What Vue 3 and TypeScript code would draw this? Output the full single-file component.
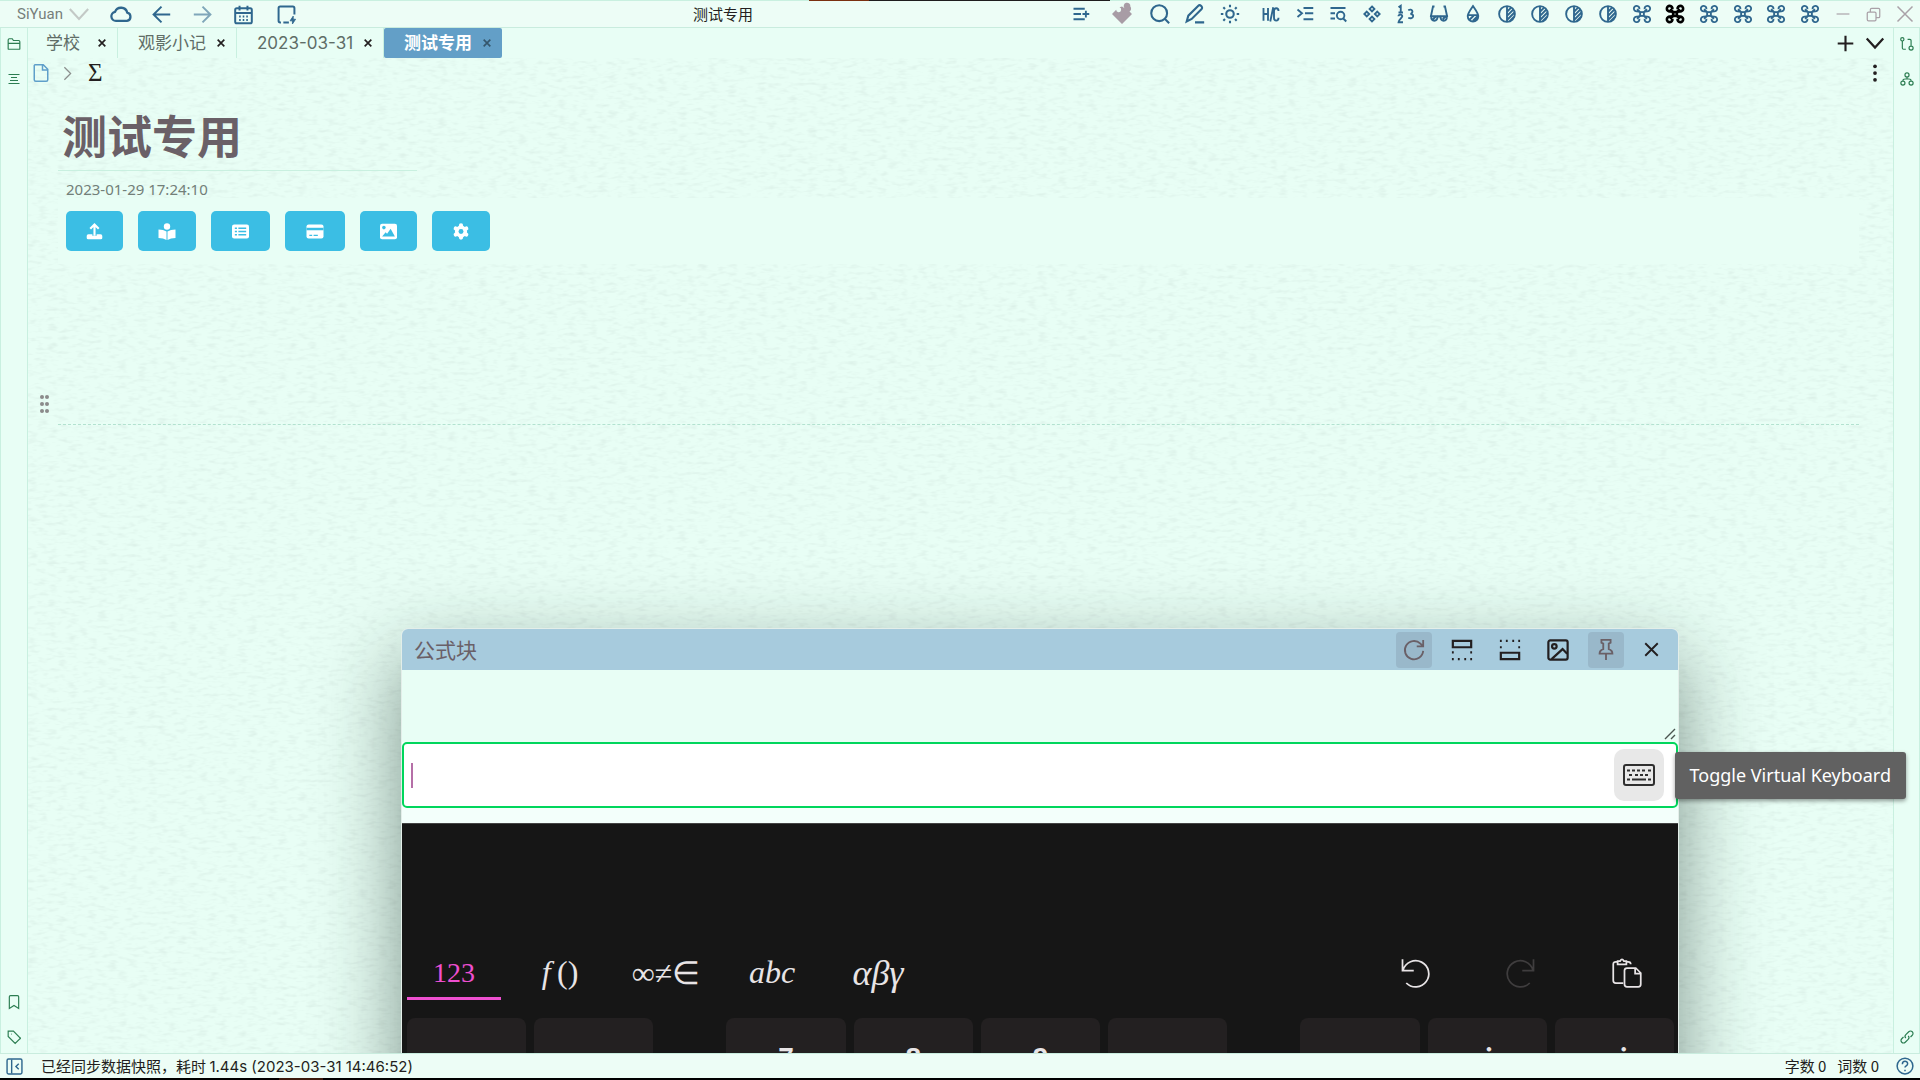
<script setup lang="ts">
import { ref } from 'vue'

interface Action {
  icon: string
  label: string
  dark?: boolean
}

const drone =
  '<path d="M8.500 5.500A3.700 3.700 0 1 0 5.500 8.500L9 9M15.500 5.500A3.700 3.700 0 1 1 18.500 8.500L15 9M8.500 18.500A3.700 3.700 0 1 1 5.500 15.500L9 15M15.500 18.500A3.700 3.700 0 1 0 18.500 15.500L15 15M5.500 5.500l4 4M18.500 5.500l-4 4M5.500 18.500l4-4M18.500 18.500l-4-4"/><rect x="9.500" y="9.500" width="5" height="5"/>'
const half =
  '<circle cx="12" cy="12" r="10.500"/><path d="M12 1.500v21M12 9l5.500-5.500M12 14.500l8.500-8.500M12 20L22 10M15.500 21.500l6-6"/>'

const icons: Record<string, string> = {
  chevron: '<path d="M1 6l11 12L23 6"/>',
  cloud: '<path d="M6.500 19.500a5 5 0 0 1-1-9.900A7 7 0 0 1 18.800 10.500a4.600 4.600 0 0 1-.3 9z"/>',
  back: '<path d="M23 12H2M12 2L2 12l10 10"/>',
  forward: '<path d="M1 12h21M12 2l10 10-10 10"/>',
  calendar:
    '<rect x="1.500" y="4" width="21" height="19" rx="2"/><path d="M1.500 10h21M7 1v6M17 1v6"/><path d="M6.500 14.500h2M11 14.500h2M15.500 14.500h2M6.500 19h2M11 19h2M15.500 19h2"/>',
  device:
    '<path d="M22 12V4a2 2 0 0 0-2-2H4a2 2 0 0 0-2 2v16a2 2 0 0 0 2 2h1M8 22h7"/><path d="M20.500 14v4h3l-4 6v-4h-3z" fill="currentColor" stroke-width="1"/>',
  addlist: '<path d="M2 5h15M2 12h10M2 19h15M14 12h9M18.500 7.500v9"/>',
  puzzle:
    '<path fill="currentColor" stroke="none" d="M0 12l5-5a3 3 0 1 0 4-3l3-1 3 2a4 4 0 1 1 7-2 4 4 0 0 1-1 6l3 3-12 12z"/>',
  search: '<circle cx="11" cy="11" r="9.500"/><path d="M18 18l5 5"/>',
  pen: '<path d="M2 21l2-7L16 2c2-2 6 2 4 4L8 18zM12 22h11"/>',
  sun: '<circle cx="12" cy="12" r="4.500"/><path d="M12 1v3M12 20v3M1 12h3M20 12h3M4 4l2 2M18 18l2 2M20 4l-2 2M4 20l2-2"/>',
  hc: '<path d="M2 4v17M8 4v17M2 12h6M15 3l-4 19M22 8c0-5-6-5-6 0v9c0 5 6 5 6 0"/>',
  indent: '<path d="M2 6l6 5-6 5M10 4h13M12 11h11M10 19h13"/>',
  find: '<path d="M2 4h20M2 11h6M2 18h6"/><circle cx="15.500" cy="14" r="5"/><path d="M19 18l4 4"/>',
  diamonds:
    '<path d="M12 2l3.200 3.200-3.200 3.200-3.200-3.200zM12 15.600l3.200 3.200-3.200 3.200-3.200-3.200zM5 8.800l3.200 3.200L5 15.200 1.800 12zM19 8.800l3.200 3.200-3.200 3.200-3.200-3.200z"/>',
  ranks:
    '<path d="M2 3l3-2v9M2 10h6M2 15c0-3 5-3 5 0 0 2-5 5-5 8h6M15 7c5-3 8 3 3 5 6 0 4 8-3 5"/>',
  glasses:
    '<path d="M6 2H4L1 16M18 2h2l3 14M10 16q2-2 4 0"/><path d="M1.500 15H10c0 8-8.500 8-8.500 0zM14 15h8.500c0 8-8.500 8-8.500 0zM4 19l4-4M17 19l4-4"/>',
  drop: '<path d="M12 1.500C9 6 5 11 5 15a7 7 0 0 0 14 0c0-4-4-9-7-13.500zM5 13.500h14M8 19l5-5M12 21l6-6"/>',
  half,
  drone,
  minimize: '<path d="M1 12h22"/>',
  restore:
    '<rect x="2" y="8" width="14" height="14" rx="2"/><path d="M7 8V4a2 2 0 0 1 2-2h11a2 2 0 0 1 2 2v11a2 2 0 0 1-2 2h-4"/>',
  close: '<path d="M2 2l20 20M22 2L2 22"/>',
  plus: '<path d="M12 1v22M1 12h22"/>',
  more: '<g fill="currentColor" stroke="none"><circle cx="12" cy="3" r="2.500"/><circle cx="12" cy="12" r="2.500"/><circle cx="12" cy="21" r="2.500"/></g>',
  folder: '<path d="M2 20V5a2 2 0 0 1 2-2h5l2 3h9a2 2 0 0 1 2 2v12a1 1 0 0 1-1 1H3a1 1 0 0 1-1-1zM2 11h20"/>',
  outline: '<path d="M1 3h22M6 9h12M4 15h16M1 21h22"/>',
  bookmark: '<path d="M4 23V3a2 2 0 0 1 2-2h12a2 2 0 0 1 2 2v20l-8-5z"/>',
  tag: '<path d="M2 2h9l11 11a1 1 0 0 1 0 2l-8 8L2 11zM7 7h1"/>',
  graph:
    '<circle cx="4" cy="4" r="2.800"/><circle cx="19" cy="19" r="3.500"/><path d="M4 7v12a2 2 0 0 0 2 2h4M19 15V6a2 2 0 0 0-2-2h-4"/>',
  tree: '<circle cx="12" cy="5" r="3.500"/><circle cx="5" cy="19" r="3.500"/><circle cx="19" cy="19" r="3.500"/><path d="M12 8v5M5 15q0-3 4-3h6q4 0 4 3"/>',
  link: '<path d="M10 14c-2-2-2-4 0-6l5-5c4-4 10 2 6 6l-3 3M14 10c2 2 2 4 0 6l-5 5c-4 4-10-2-6-6l3-3"/>',
  dockhide: '<rect x="1.500" y="1.500" width="21" height="21" rx="2"/><path d="M8 2v20M18 8l-4 4 4 4"/>',
  help: '<circle cx="12" cy="12" r="10.500"/><path d="M8.500 9.500c0-5 7-5 7-.5 0 3-3.500 2.500-3.500 5M12 17v2"/>',
  file: '<path d="M4 1h11l6 6v14a2 2 0 0 1-2 2H5a2 2 0 0 1-2-2V2zM14 1v7h7"/>',
  right: '<path d="M7 2l10 10L7 22"/>',
  refresh: '<path d="M22 13a10 10 0 1 1-3-8l3 3M22 1v7h-7"/>',
  layoutTop:
    '<path d="M2 2h20v7H2z"/><path d="M1 14.500h2M21 14.500h2M1 22h2M7.500 22h2M14.500 22h2M21 22h2"/>',
  layoutBottom:
    '<path d="M2 15h20v7H2z"/><path d="M1 2h2M7.500 2h2M14.500 2h2M21 2h2M1 9h2M21 9h2"/>',
  image:
    '<rect x="1.500" y="1.500" width="21" height="21" rx="2"/><circle cx="8" cy="8" r="2.500"/><path d="M5 22L17 11l5 5"/>',
  pin: '<path d="M7 1h10v3l-2 1v6c3 1 4 3 4 5H5c0-2 1-4 4-5V5L7 4zM12 16v7"/>',
  undo: '<path d="M2 1v9h9M2.500 9.500A10.500 10.500 0 1 1 5 20"/>',
  redo: '<path d="M22 1v9h-9M21.500 9.500A10.500 10.500 0 1 0 19 20"/>',
  paste:
    '<path d="M4 3H3a2 2 0 0 0-2 2v13a2 2 0 0 0 2 2h6M12 3h1q2 0 2 2M4.500 2.500h2q1.500-3 3 0h2V5h-7z"/><path d="M12 8h7l4 4v9a2 2 0 0 1-2 2h-9a2 2 0 0 1-2-2V10a2 2 0 0 1 2-2zM18.500 8v4.500H23"/>',
}

const navActions: Action[] = [
  { icon: 'cloud', label: '同步' },
  { icon: 'back', label: '后退' },
  { icon: 'forward', label: '前进' },
  { icon: 'calendar', label: '日记' },
  { icon: 'device', label: '闪卡' },
]
const pluginActions: Action[] = [
  { icon: 'hc', label: '标题' },
  { icon: 'indent', label: '缩进' },
  { icon: 'find', label: '查找' },
  { icon: 'diamonds', label: '组件' },
  { icon: 'ranks', label: '编号' },
  { icon: 'glasses', label: '阅读' },
  { icon: 'drop', label: '主题色' },
  ...[1, 2, 3, 4].map((n) => ({ icon: 'half', label: `配色 ${n}` })),
  ...[1, 2, 3, 4, 5, 6].map((n) => ({ icon: 'drone', label: `片段 ${n}`, dark: n === 2 })),
]
const tabs = [
  { title: '学校' },
  { title: '观影小记' },
  { title: '2023-03-31', latin: true },
  { title: '测试专用', active: true },
]
const blockButtons = [
  {
    label: '上传',
    width: 17,
    svg: '<path d="M1 18a3 3 0 0 1 3-2h5v2h6v-2h5a3 3 0 0 1 3 2v3a2 2 0 0 1-2 2H3a2 2 0 0 1-2-2z" fill="currentColor"/><path d="M12 18V3M6 8l6-6 6 6" fill="none" stroke="currentColor" stroke-width="3"/>',
  },
  {
    label: '阅读',
    width: 18,
    svg: '<circle cx="12" cy="5" r="4.500" fill="currentColor"/><path d="M0 9q7 0 11.300 3v12Q7 21 0 21zM24 9q-7 0-11.300 3v12Q17 21 24 21z" fill="currentColor"/>',
  },
  {
    label: '列表',
    width: 19,
    svg: '<rect x="0" y="2" width="24" height="20" rx="3" fill="currentColor"/><path d="M4 7.500h3M9 7.500h11M4 12h3M9 12h11M4 16.500h3M9 16.500h11" stroke="#3bbee4" stroke-width="2"/>',
  },
  {
    label: '卡片',
    width: 20,
    svg: '<rect x="0" y="2" width="24" height="20" rx="3" fill="currentColor"/><path d="M0 8.500h24" stroke="#3bbee4" stroke-width="3.500"/><path d="M4 17.500h4M10 17.500h6" stroke="#3bbee4" stroke-width="2"/>',
  },
  {
    label: '图片',
    width: 17,
    svg: '<rect x="0" y="1" width="24" height="22" rx="3" fill="currentColor"/><circle cx="5.500" cy="6.500" r="2.500" fill="#3bbee4"/><path d="M3 19l5-6 2 2 5-7 6 11z" fill="#3bbee4"/>',
  },
  {
    label: '设置',
    width: 18,
    svg: '<path d="M12 3.500v17M4.600 7.800l14.800 8.400M19.400 7.800L4.600 16.200" stroke="currentColor" stroke-width="6" stroke-linecap="round"/><circle cx="12" cy="12" r="8.500" fill="currentColor"/><circle cx="12" cy="12" r="3.500" fill="#3bbee4"/>',
  },
]
const dialogActions = [
  { icon: 'refresh', label: '刷新', pressed: true },
  { icon: 'layoutTop', label: '上方', pressed: false },
  { icon: 'layoutBottom', label: '下方', pressed: false },
  { icon: 'image', label: '导出图片', pressed: false },
  { icon: 'pin', label: '钉住', pressed: true },
]
const layers = [
  { id: 'numeric', label: '123' },
  { id: 'functions', label: 'f' },
  { id: 'symbols', label: '∞≠∈' },
  { id: 'letters', label: 'abc' },
  { id: 'greek', label: 'αβγ' },
]
const activeLayer = ref('numeric')
const keys = ['', '', null, '7', '8', '9', '', null, '', 'i', 'xi']
const source = ref('')
const formula = ref('')
</script>

<template>
  <div class="app">
    <header class="toolbar">
      <div class="edge"></div>
      <button class="brand">
        SiYuan
        <svg viewBox="0 0 24 24" class="i20 fade" v-html="icons.chevron"></svg>
      </button>
      <nav class="nav">
        <button v-for="a in navActions" :key="a.icon" :aria-label="a.label" :class="{ faded: a.icon === 'forward' }">
          <svg viewBox="0 0 24 24" :class="a.icon === 'cloud' ? 'i22' : 'i19'" v-html="icons[a.icon]"></svg>
        </button>
      </nav>
      <h2 class="window-title">测试专用</h2>
      <div class="wide">
        <button aria-label="添加"><svg viewBox="0 0 24 24" class="i18" v-html="icons.addlist"></svg></button>
        <button aria-label="集市" class="mauve"><svg viewBox="0 0 24 24" class="i20" v-html="icons.puzzle"></svg></button>
      </div>
      <div class="medium">
        <button aria-label="搜索"><svg viewBox="0 0 24 24" class="i20" v-html="icons.search"></svg></button>
        <button aria-label="编辑"><svg viewBox="0 0 24 24" class="i20" v-html="icons.pen"></svg></button>
        <button aria-label="外观"><svg viewBox="0 0 24 24" class="i20" v-html="icons.sun"></svg></button>
      </div>
      <div class="plugins">
        <button v-for="a in pluginActions" :key="a.label" :aria-label="a.label" :class="{ dark: a.dark }">
          <svg viewBox="0 0 24 24" class="i18" v-html="icons[a.icon]"></svg>
        </button>
      </div>
      <div class="window-buttons">
        <button aria-label="最小化"><svg viewBox="0 0 24 24" class="i14" v-html="icons.minimize"></svg></button>
        <button aria-label="还原"><svg viewBox="0 0 24 24" class="i15" v-html="icons.restore"></svg></button>
        <button aria-label="关闭窗口"><svg viewBox="0 0 24 24" class="i18" v-html="icons.close"></svg></button>
      </div>
    </header>

    <div class="body">
      <aside class="dock">
        <button aria-label="文档树"><svg viewBox="0 0 24 24" class="i14" v-html="icons.folder"></svg></button>
        <button aria-label="大纲"><svg viewBox="0 0 24 24" class="i12" v-html="icons.outline"></svg></button>
        <span class="grow"></span>
        <button aria-label="书签"><svg viewBox="0 0 24 24" class="i14" v-html="icons.bookmark"></svg></button>
        <button aria-label="标签"><svg viewBox="0 0 24 24" class="i14" v-html="icons.tag"></svg></button>
      </aside>

      <main class="workspace">
        <div class="tabbar">
          <div v-for="t in tabs" :key="t.title" class="tab" :class="{ active: t.active, latin: t.latin }">
            <span>{{ t.title }}</span>
            <button :aria-label="`关闭 ${t.title}`"><svg viewBox="0 0 24 24" class="i8" v-html="icons.close"></svg></button>
          </div>
          <span class="grow"></span>
          <button class="tab-tool" aria-label="新建"><svg viewBox="0 0 24 24" class="i17" v-html="icons.plus"></svg></button>
          <button class="tab-tool" aria-label="切换"><svg viewBox="0 0 24 24" class="i18" v-html="icons.chevron"></svg></button>
        </div>

        <section class="editor">
          <svg class="paper" aria-hidden="true">
            <filter id="grain" x="0" y="0" width="100%" height="100%">
              <feTurbulence type="fractalNoise" baseFrequency="0.1 0.28" numOctaves="2" seed="4" />
              <feColorMatrix values="0 0 0 0 0.650 0 0 0 0 0.800 0 0 0 0 0.740 1.300 0 0 0 -0.620" />
            </filter>
            <rect width="100%" height="100%" filter="url(#grain)" />
          </svg>
          <div class="breadcrumb">
            <svg viewBox="0 0 24 24" class="i18 blue" v-html="icons.file"></svg>
            <svg viewBox="0 0 24 24" class="i15 gray" v-html="icons.right"></svg>
            <span class="sigma">Σ</span>
            <span class="grow"></span>
            <button aria-label="更多"><svg viewBox="0 0 24 24" class="i18" v-html="icons.more"></svg></button>
          </div>
          <article class="doc">
            <h1>测试专用</h1>
            <time>2023-01-29 17:24:10</time>
            <div class="buttons">
              <button v-for="b in blockButtons" :key="b.label" :aria-label="b.label">
                <svg viewBox="0 0 24 24" :style="{ width: b.width + 'px' }" v-html="b.svg"></svg>
              </button>
            </div>
            <div class="block">
              <button class="handle" aria-label="拖动块"><i v-for="n in 6" :key="n"></i></button>
            </div>
          </article>
        </section>

        <section class="dialog" role="dialog" aria-labelledby="dialog-title">
          <header>
            <h3 id="dialog-title">公式块</h3>
            <button v-for="a in dialogActions" :key="a.icon" :aria-label="a.label" :class="{ pressed: a.pressed }">
              <svg viewBox="0 0 24 24" class="i22" v-html="icons[a.icon]"></svg>
            </button>
            <button aria-label="关闭" class="shut"><svg viewBox="0 0 24 24" class="i15" v-html="icons.close"></svg></button>
          </header>
          <div class="source">
            <textarea v-model="source" aria-label="公式源码"></textarea>
            <svg viewBox="0 0 12 12" class="i12 grip"><path d="M1 11L11 1M7 11l4-4" /></svg>
          </div>
          <div class="mathfield">
            <span class="caret"></span>
            <input v-model="formula" aria-label="公式" />
            <button class="toggle" aria-label="Toggle Virtual Keyboard">
              <svg viewBox="0 0 32 22" class="keyboard-icon">
                <rect x="1" y="1" width="30" height="20" rx="2" />
                <path d="M4 6.500h3M9 6.500h3M14 6.500h3M19 6.500h3M25 6.500h3M6 11h3M12 11h3M17 11h3M22 11h3M4 15.500h3M9 15.500h14M25 15.500h3" />
              </svg>
            </button>
          </div>
          <div class="keyboard">
            <div class="layers">
              <button v-for="l in layers" :key="l.id" :class="[l.id, { current: activeLayer === l.id }]" @click="activeLayer = l.id">
                {{ l.label }}<span v-if="l.id === 'functions'" class="upright">&thinsp;()</span>
              </button>
              <span class="grow"></span>
              <button aria-label="撤销"><svg viewBox="0 0 24 24" class="i30" v-html="icons.undo"></svg></button>
              <button aria-label="重做" class="off"><svg viewBox="0 0 24 24" class="i30" v-html="icons.redo"></svg></button>
              <button aria-label="粘贴"><svg viewBox="0 0 24 24" class="i30" v-html="icons.paste"></svg></button>
            </div>
            <div class="keys">
              <template v-for="(k, n) in keys" :key="n">
                <span v-if="k === null" class="space"></span>
                <button v-else :aria-label="k || '键'" :class="{ math: k.includes('i') }">{{ k }}</button>
              </template>
            </div>
          </div>
        </section>
      </main>

      <aside class="dock right">
        <button aria-label="关系图"><svg viewBox="0 0 24 24" class="i14" v-html="icons.graph"></svg></button>
        <button aria-label="全局关系图"><svg viewBox="0 0 24 24" class="i14" v-html="icons.tree"></svg></button>
        <span class="grow"></span>
        <button aria-label="反向链接"><svg viewBox="0 0 24 24" class="i14" v-html="icons.link"></svg></button>
      </aside>
      <div class="tooltip" role="tooltip">Toggle Virtual Keyboard</div>
    </div>

    <footer class="status">
      <button aria-label="隐藏停靠栏"><svg viewBox="0 0 24 24" class="i17" v-html="icons.dockhide"></svg></button>
      <span class="message">已经同步数据快照，耗时 <span class="figures">1.44s (2023-03-31 14:46:52)</span></span>
      <span class="grow"></span>
      <span>字数 0</span>
      <span>词数 0</span>
      <button aria-label="帮助"><svg viewBox="0 0 24 24" class="i18" v-html="icons.help"></svg></button>
    </footer>
    <div class="base"></div>
  </div>
</template>

<style>
body {
  margin: 0;
  background: #e8fef5;
}
</style>

<style scoped>
* {
  box-sizing: border-box;
}
.app {
  height: 100vh;
  display: flex;
  flex-direction: column;
  overflow: hidden;
  color: #231f20;
  background: #e8fef5;
  font-family: 'Noto Sans', 'Noto Sans CJK SC', sans-serif;
}
button {
  display: flex;
  align-items: center;
  justify-content: center;
  padding: 0;
  border: 0;
  background: none;
  color: inherit;
  font: inherit;
}
svg {
  display: block;
  flex: none;
  overflow: visible;
  fill: none;
  stroke: currentColor;
  stroke-width: 2;
}
.i8 { width: 8px; height: 8px; stroke-width: 5; }
.i12 { width: 12px; height: 12px; }
.i14 { width: 14px; height: 14px; }
.i15 { width: 15px; height: 15px; }
.i17 { width: 17px; height: 17px; }
.i18 { width: 18px; height: 18px; }
.i19 { width: 19px; height: 19px; }
.i20 { width: 20px; height: 20px; }
.i22 { width: 22px; height: 22px; }
.i30 { width: 30px; height: 30px; stroke-width: 1.4; }
.grow { flex: 1; }

.toolbar {
  position: relative;
  flex: none;
  display: flex;
  height: 28px;
  border-top: 1px solid #c9f0e0;
  border-bottom: 1px solid #c9ecde;
  background: #edfdf6;
  color: #2f678e;
}
.toolbar svg {
  stroke-width: 2.5;
}
.edge {
  position: absolute;
  top: -1px;
  left: 809px;
  width: 301px;
  height: 1px;
  background: linear-gradient(90deg, #7a3010 60px, #1f1d1e 60px);
}
.brand {
  gap: 6px;
  padding-left: 17px;
  color: #777f7b;
  font: 15px/24px Roboto, sans-serif;
}
.fade {
  color: #c3c9c6;
}
.nav {
  display: flex;
  margin-left: 11px;
}
.nav button {
  width: 41px;
}
.nav button:last-child {
  width: 45px;
}
.nav .faded {
  color: #7fa6b9;
}
.window-title {
  flex: 1;
  margin: 0;
  padding-left: 384px;
  color: #231f20;
  font-size: 15px;
  font-weight: 400;
  line-height: 26px;
}
.wide, .medium, .plugins, .window-buttons {
  display: flex;
}
.wide button { width: 41px; }
.medium { padding-right: 7px; }
.medium button { width: 35px; }
.plugins { width: 573px; }
.plugins button { flex: 1; }
.window-buttons { color: #aaa1a8; }
.window-buttons button { width: 31px; }
.toolbar .window-buttons svg { stroke-width: 2; }
.mauve { color: #a89ca5; }
.plugins .dark { color: #000; }
.plugins .dark svg { stroke-width: 3.5; }

.body {
  position: relative;
  flex: 1;
  min-height: 0;
  display: flex;
  overflow: hidden;
}
.dock {
  flex: none;
  display: flex;
  flex-direction: column;
  gap: 3px;
  width: 28px;
  border: solid #c9f0e0;
  border-width: 0 1px;
  color: #2b7d51;
}
.dock.right { width: 27px; }
.dock button { height: 32px; }
.workspace {
  position: relative;
  flex: 1;
  min-width: 0;
  display: flex;
  flex-direction: column;
}
.tabbar {
  flex: none;
  display: flex;
  height: 30px;
  padding-right: 3px;
}
.tab {
  display: flex;
  align-items: center;
  justify-content: space-between;
  gap: 11px;
  min-width: 90px;
  padding: 0 11px 0 20px;
  border-right: 1px solid #c9f0e0;
  color: #5f6d67;
  font-size: 17px;
  line-height: 28px;
}
.tab:first-child { padding-left: 18px; }
.tab button { color: #231f20; }
.tab.latin { font-family: Inter, sans-serif; }
.tab.active {
  border-right: 0;
  border-radius: 2px;
  background: #639fc7;
  color: #fff;
  font-weight: 700;
}
.tab.active button { color: #35566c; }
.tab-tool { width: 30px; }
.tab-tool svg { stroke-width: 3; }

.editor {
  position: relative;
  flex: 1;
  min-height: 0;
}
.paper {
  position: absolute;
  inset: 0;
  width: 100%;
  height: 100%;
  stroke: none;
}
.breadcrumb {
  position: relative;
  display: flex;
  align-items: center;
  height: 30px;
  padding: 0 9px 0 4px;
}
.blue { color: #5f9fca; }
.gray { margin: 0 13px 0 10px; color: #8b8f8d; }
.sigma {
  font: 25px/30px 'Liberation Serif', serif;
}
.breadcrumb button { width: 18px; }
.doc {
  position: relative;
  padding: 0 34px 0 30px;
}
h1 {
  width: 359px;
  height: 83px;
  margin: 0;
  padding: 17px 0 0 4px;
  border-bottom: 1px solid #c9f0e0;
  color: #6a6067;
  font-size: 45px;
  font-weight: 700;
  line-height: 64px;
}
time {
  display: block;
  height: 27px;
  padding: 6px 0 0 8px;
  color: #727f79;
  font-size: 15px;
  line-height: 24px;
}
.buttons {
  display: flex;
  gap: 15px;
  padding: 13px 8px;
  background: #e8fef5;
}
.buttons button {
  height: 40px;
  padding: 0 20px;
  border-radius: 5px;
  background: #3bbee4;
  color: #fff;
}
.buttons svg { height: 17px; stroke: none; }
.block {
  height: 161px;
  padding-top: 131px;
  border-bottom: 1px dashed #b3e2d0;
}
.handle {
  display: grid;
  grid-template-columns: 4px 4px;
  gap: 3px 1px;
  width: 9px;
  margin-left: -18px;
}
.handle i {
  width: 4px;
  height: 4px;
  border-radius: 50%;
  background: #8b8b8b;
}

.dialog {
  position: absolute;
  top: 600px;
  right: 214px;
  left: 373px;
  border: 1px solid #e3eee9;
  border-radius: 7px 7px 0 0;
  background: #f3fffb;
  box-shadow: 0 30px 80px rgba(20, 40, 30, 0.5);
}
.dialog header {
  display: flex;
  align-items: center;
  gap: 12px;
  height: 41px;
  padding: 0 12px;
  border-radius: 6px 6px 0 0;
  background: #a7cbdd;
}
h3 {
  flex: 1;
  margin: 0;
  color: #6a6067;
  font-size: 21px;
  font-weight: 400;
  line-height: 40px;
}
.dialog header button {
  width: 36px;
  height: 36px;
  border-radius: 4px;
}
.dialog header .pressed {
  background: #99b8ca;
  color: #6a6067;
}
.dialog header .shut { width: 30px; }
.dialog header svg { stroke-width: 2.4; }
.dialog header .pressed svg { stroke-width: 2; }
.dialog header .shut svg { stroke-width: 3; }
.source {
  position: relative;
  height: 72px;
}
textarea {
  display: block;
  width: 100%;
  height: 100%;
  border: 0;
  background: #e8fef5;
  resize: none;
}
.grip {
  position: absolute;
  right: 2px;
  bottom: 2px;
  color: #4b5550;
  stroke-width: 1.4;
}
.mathfield {
  display: flex;
  align-items: center;
  height: 66px;
  margin-bottom: 15px;
  padding: 0 12px 0 7px;
  border: 2px solid #00d65c;
  border-radius: 5px;
  background: #fff;
}
.caret {
  width: 2px;
  height: 25px;
  background: #b56fa7;
}
.mathfield input {
  flex: 1;
  border: 0;
  outline: 0;
  background: none;
  font-size: 24px;
}
.toggle {
  width: 50px;
  height: 52px;
  border-radius: 10px;
  background: #e8e8e8;
}
.keyboard-icon {
  width: 32px;
  height: 22px;
  stroke-width: 2;
  stroke: #2f2f2f;
}
.tooltip {
  position: absolute;
  top: 724px;
  right: 14px;
  padding: 0 15px;
  border-radius: 3px;
  background: #616161;
  color: #fff;
  font: 18px/47px 'Noto Sans', sans-serif;
  box-shadow: 0 2px 4px rgba(0, 0, 0, 0.4);
}

.keyboard {
  height: 500px;
  padding: 126px 4px 0 5px;
  border-top: 1px solid #444;
  background: #161616;
  color: #e8e4e6;
  font-family: 'Liberation Serif', serif;
}
.layers {
  display: flex;
  gap: 12px;
  height: 50px;
}
.layers button {
  width: 94px;
  padding-bottom: 2px;
  border-bottom: 3px solid transparent;
  font-size: 32px;
  font-style: italic;
}
.layers .numeric {
  font-size: 28px;
  font-style: normal;
}
.layers .current {
  border-color: #ee4fd0;
  color: #ee4fd0;
}
.layers .symbols { font-style: normal; }
.layers .greek { font-size: 36px; }
.upright { font-style: normal; }
.layers .off { color: #3f3d3e; }
.keys {
  display: flex;
  gap: 8px;
  margin-top: 18px;
}
.keys button {
  flex: 1;
  height: 80px;
  border-radius: 8px;
  background: #232021;
  font: 700 28px/80px 'Liberation Sans', sans-serif;
}
.keys .math { font-family: 'Liberation Serif', serif; font-style: italic; font-size: 30px; }
.space { width: 57px; }

.status {
  flex: none;
  display: flex;
  align-items: center;
  gap: 11px;
  height: 25px;
  padding: 0 6px 0 6px;
  border-top: 1px solid #c9ecde;
  background: #edfdf6;
  font: 15px/24px 'Noto Sans CJK SC', sans-serif;
}
.status button { color: #2f678e; }
.status > button:last-child { margin-left: 6px; }
.message { margin-left: 7px; }
.figures { font-family: Inter, sans-serif; }
.base {
  flex: none;
  height: 2px;
  background: linear-gradient(90deg, #000 279px, #3a1a0c 279px, #3a1a0c 323px, #000 323px);
}
</style>
